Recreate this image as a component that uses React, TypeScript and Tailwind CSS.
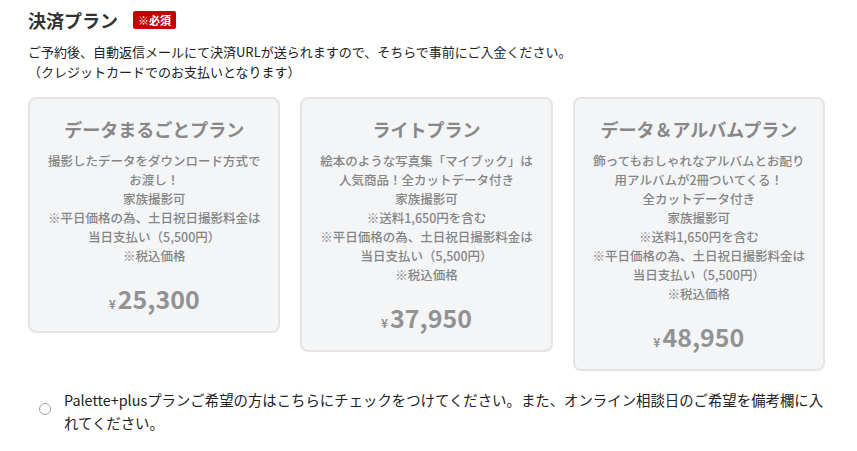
const plans = [
  {
    name: 'データまるごとプラン',
    lines: [
      '撮影したデータをダウンロード方式でお渡し！',
      '家族撮影可',
      '※平日価格の為、土日祝日撮影料金は当日支払い（5,500円）',
      '※税込価格',
    ],
    price: '25,300',
  },
  {
    name: 'ライトプラン',
    lines: [
      '絵本のような写真集「マイブック」は人気商品！全カットデータ付き',
      '家族撮影可',
      '※送料1,650円を含む',
      '※平日価格の為、土日祝日撮影料金は当日支払い（5,500円）',
      '※税込価格',
    ],
    price: '37,950',
  },
  {
    name: 'データ＆アルバムプラン',
    lines: [
      '飾ってもおしゃれなアルバムとお配り用アルバムが2冊ついてくる！',
      '全カットデータ付き',
      '家族撮影可',
      '※送料1,650円を含む',
      '※平日価格の為、土日祝日撮影料金は当日支払い（5,500円）',
      '※税込価格',
    ],
    price: '48,950',
  },
]

function PlanCard({ name, lines, price }: { name: string; lines: string[]; price: string }) {
  return (
    <div className="rounded-lg border-2 border-[#e4e4e4] bg-[#f4f5f7] px-4 pt-[17px] pb-[9px] text-center text-[#858585]">
      <div className="text-[18px] font-bold leading-[26px] text-[#888]">{name}</div>
      <div className="mt-[9px] text-[12.5px] font-medium leading-[19px]">
        {lines.map((line) => (
          <p key={line}>{line}</p>
        ))}
      </div>
      <div className="mt-[15px] flex items-baseline justify-center font-bold leading-[36px] text-[#929292]">
        <span className="mr-[2px] text-[12px]">¥</span>
        <span className="text-[25px]">{price}</span>
      </div>
    </div>
  )
}

export default function App() {
  return (
    <div
      className="min-h-screen bg-white px-7 pt-[7px] text-[#2b2b2b]"
      style={{ fontFamily: '"Noto Sans CJK JP", "Noto Sans", sans-serif' }}
    >
      <div className="flex items-center">
        <h2 className="text-[18px] font-bold leading-[26px] text-[#333]">決済プラン</h2>
        <span className="ml-[15px] flex h-[18px] items-center rounded-[2px] bg-[#c40000] px-[5px] text-[11px] font-bold text-white">
          ※必須
        </span>
      </div>

      <div className="mt-[9px] text-[13px] leading-[20px] text-[#222]">
        <p>ご予約後、自動返信メールにて決済URLが送られますので、そちらで事前にご入金ください。</p>
        <p>（クレジットカードでのお支払いとなります）</p>
      </div>

      <div className="mt-[15px] mr-1 grid grid-cols-3 items-start gap-5">
        {plans.map((plan) => (
          <PlanCard key={plan.name} {...plan} />
        ))}
      </div>

      <label className="mt-[17px] flex items-center pl-[11px]">
        <span className="mt-[-4px] h-[12px] w-[12px] shrink-0 rounded-full border border-[#a0a0a0] bg-white" />
        <span className="ml-[13px] text-[14.4px] leading-[23px] text-[#222]">
          Palette+plusプランご希望の方はこちらにチェックをつけてください。また、オンライン相談日のご希望を備考欄に入れてください。
        </span>
      </label>
    </div>
  )
}
